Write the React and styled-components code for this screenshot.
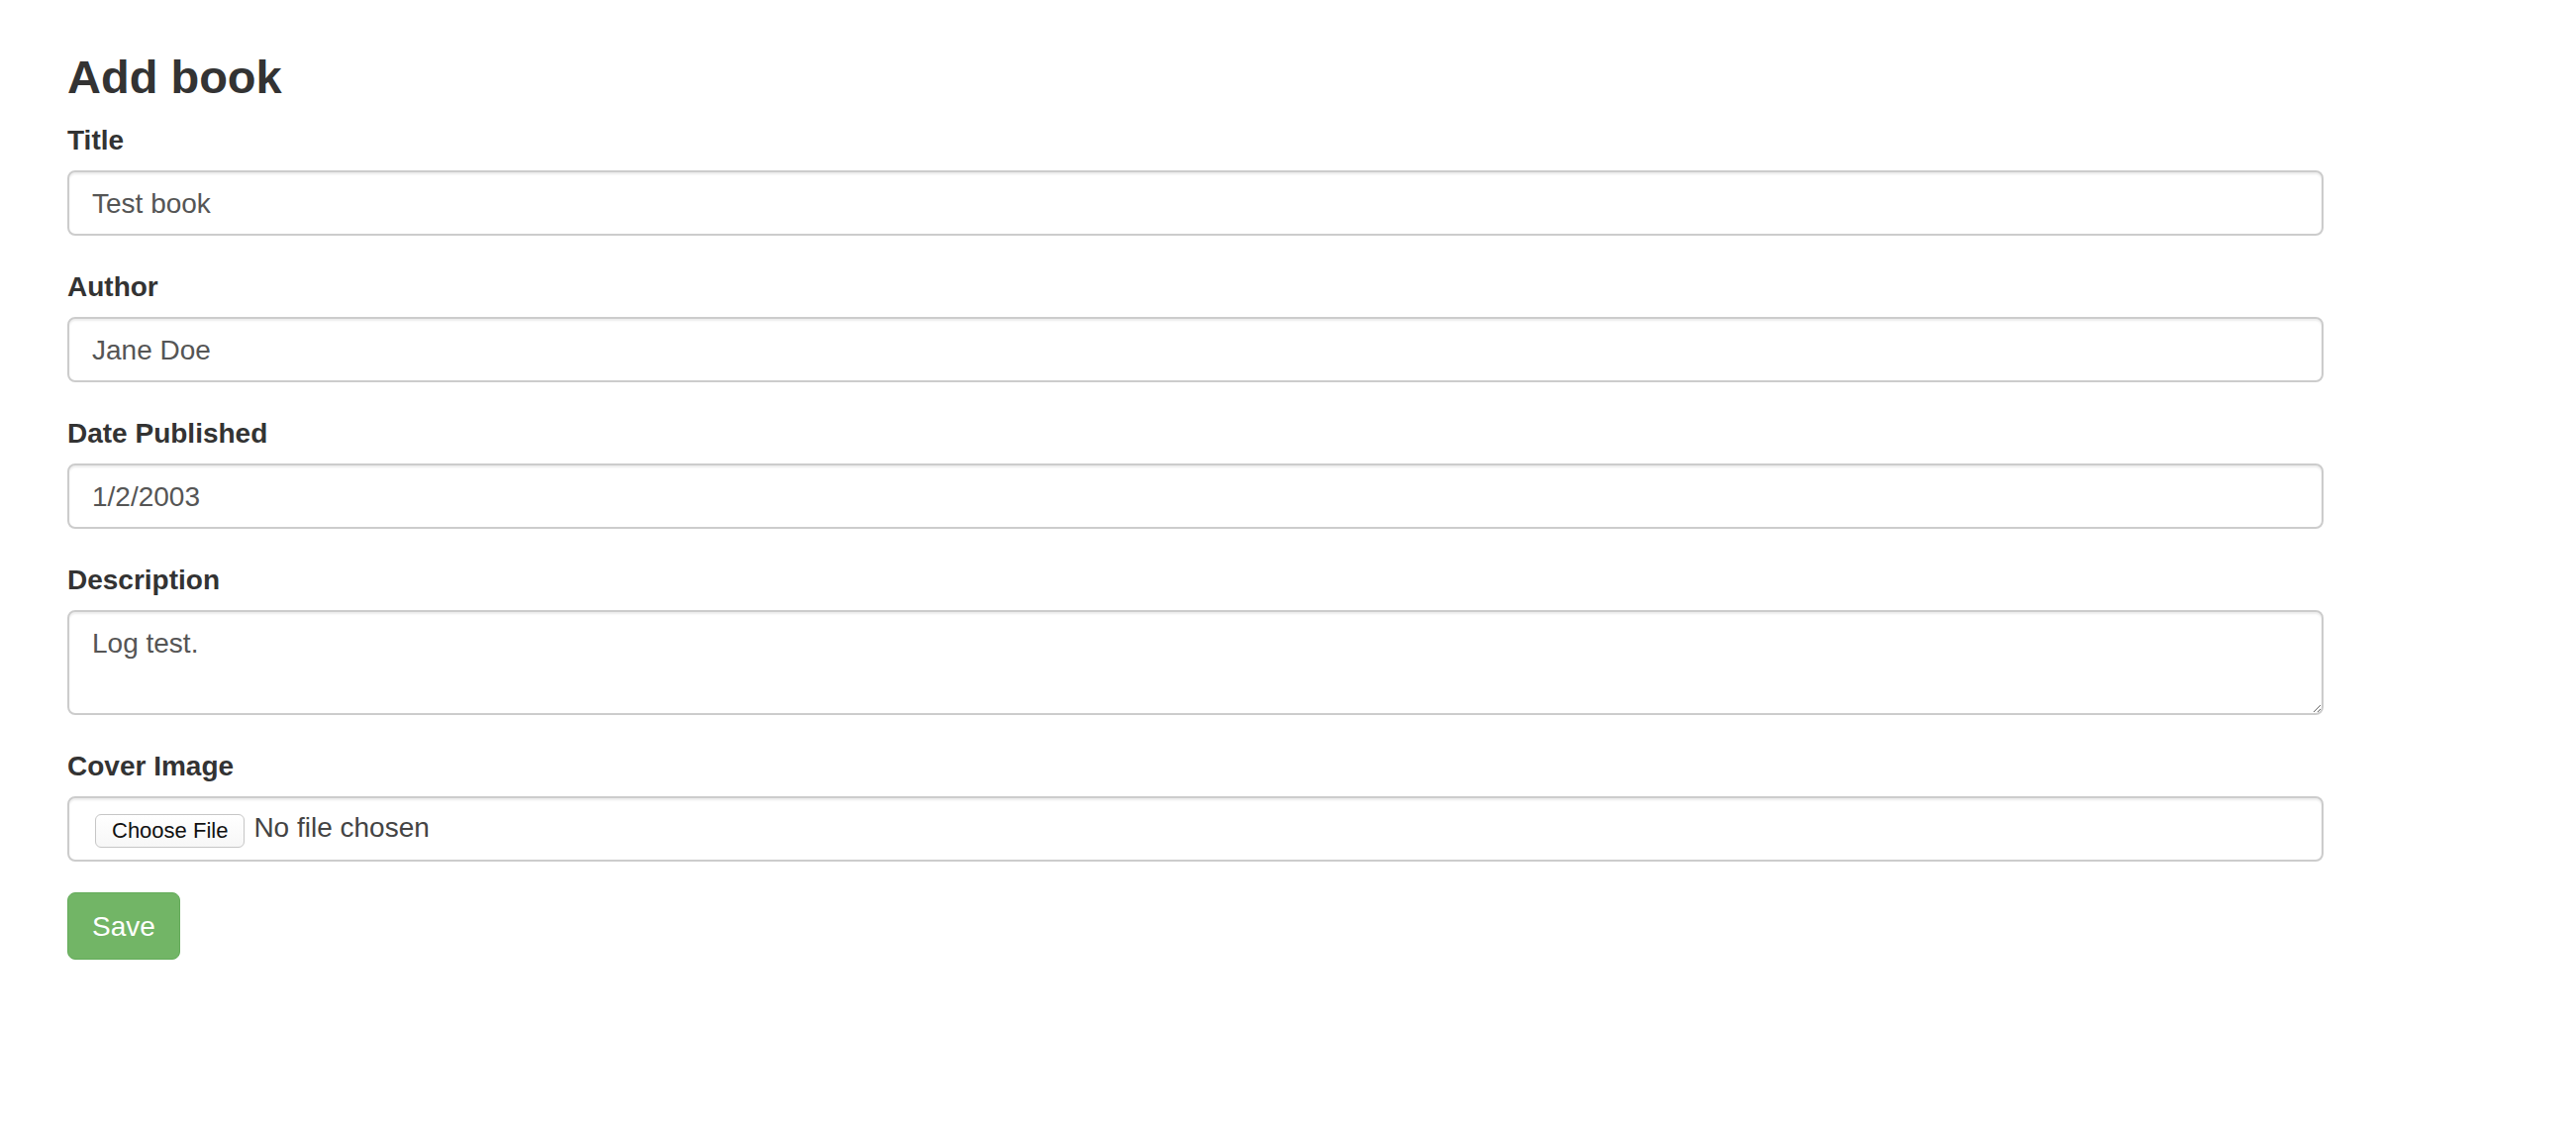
import styled, { createGlobalStyle } from 'styled-components';

const GlobalStyle = createGlobalStyle`
  html, body {
    margin: 0;
    padding: 0;
    background: #fff;
  }
  body {
    font-family: "Liberation Sans", Arial, sans-serif;
    color: #333;
  }
`;

const Page = styled.div`
  padding: 51px 0 60px 68px;
`;

const Heading = styled.h3`
  margin: 0 0 18px;
  font-size: 47px;
  line-height: 53px;
  font-weight: 700;
  color: #333;
`;

const Form = styled.form`
  width: 2279px;
`;

const FormGroup = styled.div`
  margin-bottom: ${(p) => (p.$last ? '31px' : '32px')};
`;

const Label = styled.label`
  display: block;
  margin-bottom: 10px;
  font-size: 28px;
  line-height: 40px;
  font-weight: 700;
  color: #333;
`;

const fieldBase = `
  display: block;
  width: 100%;
  box-sizing: border-box;
  border: 2px solid #ccc;
  border-radius: 8px;
  background: #fff;
  box-shadow: inset 0 2px 2px rgba(0, 0, 0, 0.075);
  font-family: "Liberation Sans", Arial, sans-serif;
  font-size: 28px;
  line-height: 40px;
  color: #555;
  outline: none;
`;

const TextInput = styled.input`
  ${fieldBase}
  height: 66px;
  padding: 2px 23px 0;
`;

const TextArea = styled.textarea`
  ${fieldBase}
  height: 106px;
  padding: 12px 23px;
  resize: vertical;
`;

const FileField = styled.div`
  ${fieldBase}
  height: 66px;
  padding: 3px 26px 0;
  display: flex;
  align-items: center;
  gap: 9px;
`;

const ChooseButton = styled.button`
  height: 34px;
  padding: 0 16px;
  border: 1px solid #c6c6c6;
  border-radius: 6px;
  background: linear-gradient(#fff, #f7f7f7);
  font-family: "Liberation Sans", Arial, sans-serif;
  font-size: 22px;
  line-height: 32px;
  color: #111;
  cursor: pointer;
`;

const FileStatus = styled.span`
  font-size: 28px;
  line-height: 40px;
  color: #444;
  margin-top: -6px;
`;

const SaveButton = styled.button`
  height: 68px;
  padding: 2px 24px 0;
  border: 1px solid #64ab5a;
  border-radius: 8px;
  background: #72b566;
  color: #fff;
  font-family: "Liberation Sans", Arial, sans-serif;
  font-size: 28px;
  line-height: 64px;
  cursor: pointer;
`;

function App() {
  return (
    <Page>
      <GlobalStyle />
      <Heading>Add book</Heading>
      <Form onSubmit={(e) => e.preventDefault()}>
        <FormGroup>
          <Label htmlFor="title">Title</Label>
          <TextInput id="title" type="text" defaultValue="Test book" />
        </FormGroup>
        <FormGroup>
          <Label htmlFor="author">Author</Label>
          <TextInput id="author" type="text" defaultValue="Jane Doe" />
        </FormGroup>
        <FormGroup>
          <Label htmlFor="date">Date Published</Label>
          <TextInput id="date" type="text" defaultValue="1/2/2003" />
        </FormGroup>
        <FormGroup>
          <Label htmlFor="description">Description</Label>
          <TextArea id="description" defaultValue="Log test." />
        </FormGroup>
        <FormGroup $last>
          <Label>Cover Image</Label>
          <FileField>
            <ChooseButton type="button">Choose File</ChooseButton>
            <FileStatus>No file chosen</FileStatus>
          </FileField>
        </FormGroup>
        <SaveButton type="submit">Save</SaveButton>
      </Form>
    </Page>
  );
}

export default App;
